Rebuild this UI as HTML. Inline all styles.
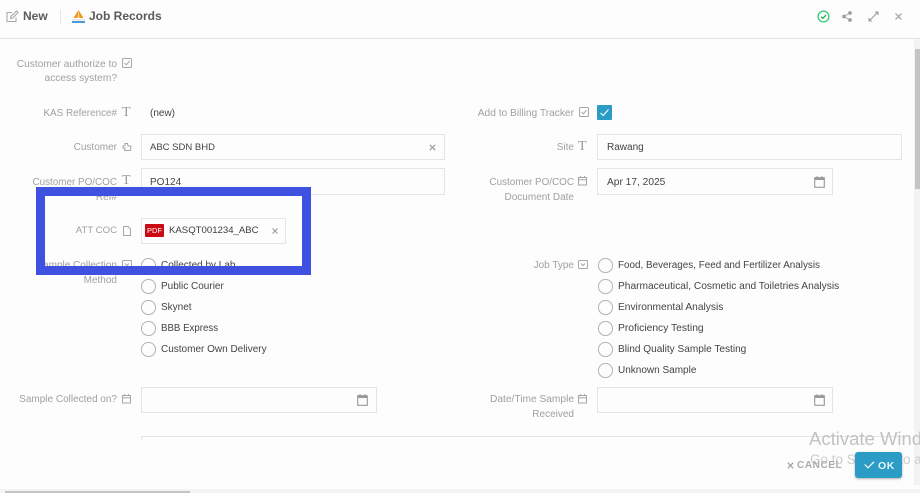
<!DOCTYPE html>
<html><head><meta charset="utf-8">
<style>
html,body{margin:0;padding:0;width:920px;height:493px;overflow:hidden;background:#fdfdfd;font-family:"Liberation Sans",sans-serif}
#p{position:relative;width:920px;height:493px;overflow:hidden;background:#fdfdfd}
#p>*{position:absolute}
.l{right:803px;color:#a0a0a0;font-size:10px;line-height:16px;text-align:right;white-space:nowrap;margin-top:1px}
.r{right:346px;color:#a0a0a0;font-size:10px;line-height:16px;text-align:right;white-space:nowrap;margin-top:1px}
.t{color:#444;font-size:10px;line-height:16px;white-space:nowrap;margin-top:1px}
.b{border:1px solid #e4e4e4;box-sizing:border-box;background:#fdfdfd}
.c{width:14.5px;height:14.5px;border:1.4px solid #b3b3b3;border-radius:50%;box-sizing:border-box;background:#fdfdfd}
svg{overflow:visible}
.i{fill:none;stroke:#a6a6a6;stroke-width:1}
.T{font-family:"Liberation Serif",serif;font-size:14px;line-height:14px;color:#9a9a9a}
</style></head><body><div id="p">

<!-- header -->
<div style="left:0;top:38px;width:920px;height:1px;background:#e2e2e2"></div>
<svg style="left:6px;top:10px" width="13" height="13" viewBox="0 0 13 13"><path d="M10 7.5V11.5H1V2.5H6" fill="none" stroke="#a8a8a8" stroke-width="1.1"/><path d="M4.5 8.5L5 6.3L10.5 1L12 2.5L6.7 8Z" fill="none" stroke="#a8a8a8" stroke-width="1.1"/></svg>
<div style="left:23px;top:8px;font-size:12px;line-height:17px;font-weight:bold;color:#5a5a5a">New</div>
<div style="left:60px;top:10px;width:1px;height:14px;background:#e6e6e6"></div>
<svg style="left:71px;top:9px" width="15" height="15" viewBox="0 0 15 15"><path d="M7.5 1L12.5 9H2.5Z" fill="#f0961e"/><path d="M7.5 1L8.5 9H6.5Z" fill="#fdd9a0"/><rect x="1" y="10" width="13" height="1.5" fill="#e3e3e3"/><rect x="1" y="12" width="13" height="2" fill="#4a9bd8"/></svg>
<div style="left:89px;top:8px;font-size:12px;line-height:17px;font-weight:bold;color:#5a5a5a">Job Records</div>

<svg style="left:817px;top:10px" width="13" height="13" viewBox="0 0 13 13"><circle cx="6.5" cy="6.5" r="5.4" fill="none" stroke="#2ecc71" stroke-width="1.3"/><path d="M4 6.7L5.8 8.4L9 5" fill="none" stroke="#27ae60" stroke-width="1.3"/></svg>
<svg style="left:842px;top:11px" width="10" height="11" viewBox="0 0 10 11"><circle cx="2" cy="5.5" r="1.9" fill="#a0a0a0"/><circle cx="8" cy="2" r="1.9" fill="#a0a0a0"/><circle cx="8" cy="9" r="1.9" fill="#a0a0a0"/><path d="M2 5.5L8 2M2 5.5L8 9" stroke="#a0a0a0" stroke-width="1"/></svg>
<svg style="left:868px;top:11px" width="11" height="11" viewBox="0 0 11 11"><path d="M6.5 0.5H10.5V4.5Z M0.5 6.5V10.5H4.5Z" fill="#a0a0a0"/><path d="M9 2L2 9" stroke="#a0a0a0" stroke-width="1.2"/></svg>
<svg style="left:895px;top:13px" width="7" height="7" viewBox="0 0 7 7"><path d="M0.5 0.5L6.5 6.5M6.5 0.5L0.5 6.5" stroke="#9a9a9a" stroke-width="1.1"/></svg>

<!-- row 1 -->
<div class="l" style="top:56px;font-size:10.2px">Customer authorize to</div>
<div class="l" style="top:70px;font-size:10.2px">access system?</div>
<svg style="left:122px;top:58px" width="10" height="10" viewBox="0 0 10 10"><rect x=".5" y=".5" width="9" height="9" rx="1" class="i"/><path d="M2.5 5L4.3 6.8L7.7 3" class="i"/></svg>

<!-- reference -->
<div class="l" style="top:105px;font-size:9.9px">KAS Reference#</div>
<div class="T" style="left:122px;top:106px">T</div>
<div class="t" style="left:150px;top:105px">(new)</div>

<div class="r" style="top:105px;font-size:10.2px">Add to Billing Tracker</div>
<svg style="left:579px;top:107px" width="10" height="10" viewBox="0 0 10 10"><rect x=".5" y=".5" width="9" height="9" rx="1" class="i"/><path d="M2.5 5L4.3 6.8L7.7 3" class="i"/></svg>
<div style="left:597px;top:105px;width:15px;height:15px;background:#2a9cc6;border-radius:1px"></div>
<svg style="left:597px;top:105px" width="15" height="15" viewBox="0 0 15 15"><path d="M3.5 8L6.2 10.5L11.5 4.5" fill="none" stroke="#fff" stroke-width="1.1"/></svg>

<!-- customer -->
<div class="l" style="top:139px">Customer</div>
<svg style="left:122px;top:142px" width="10" height="10" viewBox="0 0 10 10"><path d="M3 1.5H5.5L6 4H9L8.5 8.5H2.5L3 6H1V4L3 3.5Z" class="i"/></svg>
<div class="b" style="left:141px;top:134px;width:304px;height:26px"></div>
<div class="t" style="left:150px;top:139px;font-size:9.5px">ABC SDN BHD</div>
<svg style="left:429px;top:144px" width="7" height="7" viewBox="0 0 7 7"><path d="M.8 .8L6.2 6.2M6.2 .8L.8 6.2" stroke="#9a9a9a" stroke-width="1.1"/></svg>

<div class="r" style="top:139px">Site</div>
<div class="T" style="left:578px;top:140px">T</div>
<div class="b" style="left:597px;top:134px;width:305px;height:26px"></div>
<div class="t" style="left:607px;top:139px">Rawang</div>

<!-- PO -->
<div class="l" style="top:174px;font-size:9.9px">Customer PO/COC</div>
<div class="T" style="left:122px;top:174px">T</div>
<div class="l" style="top:189px">Ref#</div>
<div class="b" style="left:141px;top:168px;width:304px;height:27px"></div>
<div class="t" style="left:150px;top:174px">PO124</div>

<div class="r" style="top:174px;font-size:9.9px">Customer PO/COC</div>
<svg style="left:578px;top:176px" width="10" height="10" viewBox="0 0 10 10"><rect x=".5" y="1.5" width="8" height="7.5" class="i"/><path d="M.5 3.7H8.5M2.5 0V2M6.5 0V2" class="i"/></svg>
<div class="r" style="top:189px">Document Date</div>
<div class="b" style="left:597px;top:168px;width:236px;height:27px"></div>
<div class="t" style="left:607px;top:174px;font-size:10.2px">Apr 17, 2025</div>
<svg style="left:814px;top:176px" width="11" height="12" viewBox="0 0 11 12"><rect x=".7" y="1.7" width="9.6" height="9.6" fill="none" stroke="#999" stroke-width="1.1"/><rect x=".7" y="1.7" width="9.6" height="2.3" fill="#999"/><path d="M3 0V2M8 0V2" stroke="#999"/></svg>

<!-- ATT COC -->
<div class="l" style="top:222px;font-size:9.6px">ATT COC</div>
<svg style="left:123px;top:226px" width="8" height="10" viewBox="0 0 8 10"><path d="M.5 .5H5L7.5 3V9.5H.5Z" class="i"/></svg>
<div class="b" style="left:141px;top:218px;width:145px;height:26px"></div>
<div style="left:145px;top:224px;width:19px;height:13px;background:#cc0a14;border-radius:1px;color:#fff;font-size:7.5px;line-height:13px;text-align:center">PDF</div>
<div class="t" style="left:169px;top:222px;color:#3e3e3e;font-size:9.6px">KASQT001234_ABC</div>
<svg style="left:272px;top:228px" width="6" height="6" viewBox="0 0 6 6"><path d="M.5 .5L5.5 5.5M5.5 .5L.5 5.5" stroke="#9a9a9a" stroke-width="1.1"/></svg>

<!-- sample collection -->
<div class="l" style="top:257px">Sample Collection</div>
<svg style="left:122px;top:260px" width="10" height="9" viewBox="0 0 10 9"><rect x=".5" y=".5" width="9" height="8" rx="1" class="i"/><path d="M3 3.5L5 5.5L7 3.5" class="i"/></svg>
<div class="l" style="top:272px">Method</div>

<div class="c" style="left:141px;top:258px"></div><div class="t" style="left:161px;top:257px">Collected by Lab</div>
<div class="c" style="left:141px;top:279px"></div><div class="t" style="left:161px;top:278px">Public Courier</div>
<div class="c" style="left:141px;top:300px"></div><div class="t" style="left:161px;top:299px">Skynet</div>
<div class="c" style="left:141px;top:321px"></div><div class="t" style="left:161px;top:320px;font-size:9.7px">BBB Express</div>
<div class="c" style="left:141px;top:342px"></div><div class="t" style="left:161px;top:341px">Customer Own Delivery</div>

<!-- job type -->
<div class="r" style="top:257px">Job Type</div>
<svg style="left:578px;top:260px" width="10" height="9" viewBox="0 0 10 9"><rect x=".5" y=".5" width="9" height="8" rx="1" class="i"/><path d="M3 3.5L5 5.5L7 3.5" class="i"/></svg>
<div class="c" style="left:598px;top:258px"></div><div class="t" style="left:618px;top:257px;font-size:9.9px">Food, Beverages, Feed and Fertilizer Analysis</div>
<div class="c" style="left:598px;top:279px"></div><div class="t" style="left:618px;top:278px;font-size:10.2px">Pharmaceutical, Cosmetic and Toiletries Analysis</div>
<div class="c" style="left:598px;top:300px"></div><div class="t" style="left:618px;top:299px;font-size:10.2px">Environmental Analysis</div>
<div class="c" style="left:598px;top:321px"></div><div class="t" style="left:618px;top:320px;font-size:10.3px">Proficiency Testing</div>
<div class="c" style="left:598px;top:342px"></div><div class="t" style="left:618px;top:341px;font-size:10.1px">Blind Quality Sample Testing</div>
<div class="c" style="left:598px;top:363px"></div><div class="t" style="left:618px;top:362px">Unknown Sample</div>

<!-- dates -->
<div class="l" style="top:391px">Sample Collected on?</div>
<svg style="left:122px;top:394px" width="10" height="10" viewBox="0 0 10 10"><rect x=".5" y="1.5" width="8" height="7.5" class="i"/><path d="M.5 3.7H8.5M2.5 0V2M6.5 0V2" class="i"/></svg>
<div class="b" style="left:141px;top:387px;width:236px;height:26px"></div>
<svg style="left:357px;top:394px" width="11" height="12" viewBox="0 0 11 12"><rect x=".7" y="1.7" width="9.6" height="9.6" fill="none" stroke="#999" stroke-width="1.1"/><rect x=".7" y="1.7" width="9.6" height="2.3" fill="#999"/><path d="M3 0V2M8 0V2" stroke="#999"/></svg>

<div class="r" style="top:391px;font-size:10.2px">Date/Time Sample</div>
<svg style="left:578px;top:394px" width="10" height="10" viewBox="0 0 10 10"><rect x=".5" y="1.5" width="8" height="7.5" class="i"/><path d="M.5 3.7H8.5M2.5 0V2M6.5 0V2" class="i"/></svg>
<div class="r" style="top:406px">Received</div>
<div class="b" style="left:597px;top:387px;width:236px;height:26px"></div>
<svg style="left:814px;top:394px" width="11" height="12" viewBox="0 0 11 12"><rect x=".7" y="1.7" width="9.6" height="9.6" fill="none" stroke="#999" stroke-width="1.1"/><rect x=".7" y="1.7" width="9.6" height="2.3" fill="#999"/><path d="M3 0V2M8 0V2" stroke="#999"/></svg>

<!-- textarea stub -->
<div style="left:141px;top:436px;width:761px;height:1px;background:#e4e4e4"></div>
<div style="left:141px;top:436px;width:1px;height:4px;background:#e4e4e4"></div>

<!-- blue annotation -->
<div style="left:36px;top:187px;width:275px;height:88px;box-sizing:border-box;border:9px solid #3f51e0;background:transparent"></div>

<!-- scrollbars -->
<div style="left:914px;top:39px;width:6px;height:446px;background:#f3f3f3"></div>
<div style="left:915px;top:49px;width:5px;height:140px;background:#c4c4c4"></div>
<div style="left:0;top:489px;width:920px;height:4px;background:#f3f3f3"></div>
<div style="left:5px;top:491px;width:185px;height:2px;background:#c4c4c4"></div>

<!-- watermark -->
<div style="left:809px;top:429px;font-size:18.5px;line-height:20px;color:#c2c2c2;white-space:nowrap">Activate Windows</div>
<div style="left:810px;top:452px;font-size:13.5px;line-height:16px;color:#cccccc;white-space:nowrap">Go to Settings to activate</div>

<!-- footer buttons -->
<svg style="left:787px;top:462px" width="7" height="7" viewBox="0 0 7 7"><path d="M.7 .7L6.3 6.3M6.3 .7L.7 6.3" stroke="#a0a0a0" stroke-width="1.2"/></svg>
<div style="left:797px;top:458px;font-size:10px;line-height:16px;font-weight:bold;letter-spacing:.6px;color:#ababab">CANCEL</div>
<div style="left:855px;top:452px;width:47px;height:26px;background:#2a9cc6;border-radius:3px;box-shadow:0 1px 2px rgba(0,0,0,.3)"></div>
<svg style="left:864px;top:461px" width="11" height="8" viewBox="0 0 11 8"><path d="M.7 3.5L4 6.8L10 .8" fill="none" stroke="#fff" stroke-width="1.2"/></svg>
<div style="left:878px;top:458px;font-size:10.5px;line-height:16px;font-weight:bold;letter-spacing:.6px;color:#e8f5fa">OK</div>

</div></body></html>
